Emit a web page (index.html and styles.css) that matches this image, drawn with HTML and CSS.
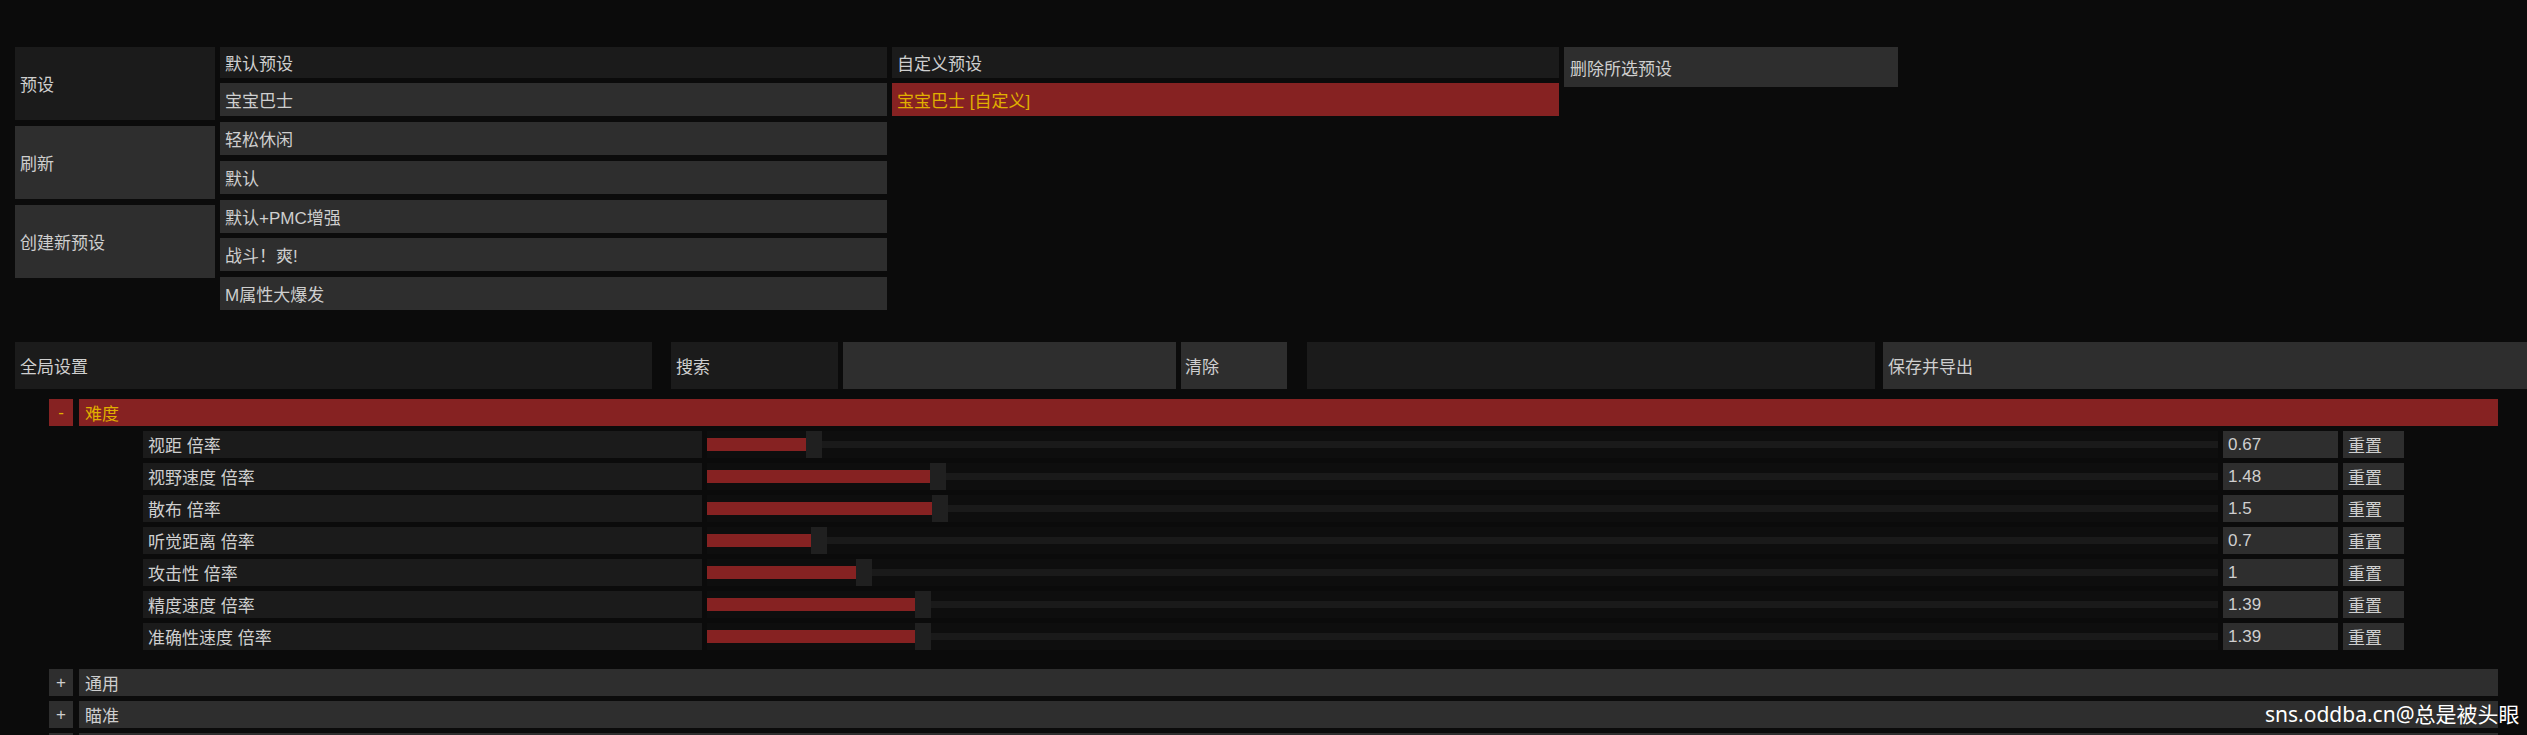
FILE: index.html
```html
<!DOCTYPE html>
<html lang="zh">
<head>
<meta charset="utf-8">
<title>SAIN</title>
<link rel="stylesheet" href="styles.css">
</head>
<body>
<div class="page">
  <div class="presets">
    <div class="col col-actions">
      <div class="btn btn-dark tall">预设</div>
      <div class="btn tall">刷新</div>
      <div class="btn tall">创建新预设</div>
    </div>
    <div class="col col-list">
      <div class="btn btn-dark head">默认预设</div>
      <div class="btn item">宝宝巴士</div>
      <div class="btn item">轻松休闲</div>
      <div class="btn item">默认</div>
      <div class="btn item">默认+PMC增强</div>
      <div class="btn item">战斗！爽!</div>
      <div class="btn item">M属性大爆发</div>
    </div>
    <div class="col col-list">
      <div class="btn btn-dark head">自定义预设</div>
      <div class="btn item selected">宝宝巴士 [自定义]</div>
    </div>
    <div class="col col-delete">
      <div class="btn del">删除所选预设</div>
    </div>
  </div>

  <div class="toolbar">
    <div class="btn btn-dark tb-global">全局设置</div>
    <div class="btn btn-dark tb-search">搜索</div>
    <div class="btn tb-input"></div>
    <div class="btn tb-clear">清除</div>
    <div class="btn btn-dark tb-blank"></div>
    <div class="btn tb-save">保存并导出</div>
  </div>

  <div class="section open">
    <div class="sec-head">
      <div class="toggle">-</div>
      <div class="sec-title">难度</div>
    </div>
    <div class="rows">
      <div class="row">
        <div class="label">视距 倍率</div>
        <div class="slider"><div class="track"></div><div class="fill" style="width:99px"></div><div class="thumb" style="left:99px"></div></div>
        <div class="value">0.67</div>
        <div class="reset">重置</div>
      </div>
      <div class="row">
        <div class="label">视野速度 倍率</div>
        <div class="slider"><div class="track"></div><div class="fill" style="width:223px"></div><div class="thumb" style="left:223px"></div></div>
        <div class="value">1.48</div>
        <div class="reset">重置</div>
      </div>
      <div class="row">
        <div class="label">散布 倍率</div>
        <div class="slider"><div class="track"></div><div class="fill" style="width:225px"></div><div class="thumb" style="left:225px"></div></div>
        <div class="value">1.5</div>
        <div class="reset">重置</div>
      </div>
      <div class="row">
        <div class="label">听觉距离 倍率</div>
        <div class="slider"><div class="track"></div><div class="fill" style="width:104px"></div><div class="thumb" style="left:104px"></div></div>
        <div class="value">0.7</div>
        <div class="reset">重置</div>
      </div>
      <div class="row">
        <div class="label">攻击性 倍率</div>
        <div class="slider"><div class="track"></div><div class="fill" style="width:149px"></div><div class="thumb" style="left:149px"></div></div>
        <div class="value">1</div>
        <div class="reset">重置</div>
      </div>
      <div class="row">
        <div class="label">精度速度 倍率</div>
        <div class="slider"><div class="track"></div><div class="fill" style="width:208px"></div><div class="thumb" style="left:208px"></div></div>
        <div class="value">1.39</div>
        <div class="reset">重置</div>
      </div>
      <div class="row">
        <div class="label">准确性速度 倍率</div>
        <div class="slider"><div class="track"></div><div class="fill" style="width:208px"></div><div class="thumb" style="left:208px"></div></div>
        <div class="value">1.39</div>
        <div class="reset">重置</div>
      </div>
    </div>
  </div>

  <div class="collapsed">
    <div class="sec-head">
      <div class="toggle">+</div>
      <div class="sec-title">通用</div>
    </div>
    <div class="sec-head">
      <div class="toggle">+</div>
      <div class="sec-title">瞄准</div>
    </div>
    <div class="sec-head">
      <div class="toggle"></div>
      <div class="sec-title"></div>
    </div>
  </div>

  <div class="watermark">sns.oddba.cn@总是被头眼</div>
</div>
</body>
</html>
```

FILE: styles.css
```css
html, body {
  margin: 0;
  padding: 0;
  background: #0b0b0b;
}

.page {
  position: relative;
  width: 2527px;
  height: 735px;
  overflow: hidden;
  font-family: "Liberation Sans", "Noto Sans CJK SC", sans-serif;
  font-size: 17px;
  color: #cfcfcf;
}

.btn {
  background: #2e2e2e;
  display: flex;
  align-items: center;
  padding-left: 5px;
  box-sizing: border-box;
  white-space: nowrap;
}

.btn-dark {
  background: #1b1b1b;
}

/* presets area */
.presets {
  display: flex;
  gap: 5px;
  padding: 47px 0 0 15px;
  align-items: flex-start;
}

.col {
  display: flex;
  flex-direction: column;
}

.col-actions {
  width: 200px;
  gap: 6px;
}

.tall {
  height: 73px;
}

.col-list {
  width: 667px;
  gap: 5.8px;
}

.head {
  height: 30.5px;
}

.item {
  height: 33px;
}

.selected {
  background: #862222;
  color: #e0b000;
}

.col-delete {
  width: 334px;
}

.del {
  height: 40px;
  padding-left: 6px;
}

/* toolbar */
.toolbar {
  display: flex;
  height: 47px;
  margin-top: 32px;
  padding-left: 15px;
}

.toolbar .btn {
  height: 47px;
  flex: none;
}

.tb-global { width: 637px; }
.tb-search { width: 167px; margin-left: 19px; }
.tb-input  { width: 333px; margin-left: 5px; }
.tb-clear  { width: 106px; margin-left: 5px; padding-left: 4px; }
.tb-blank  { width: 568px; margin-left: 20px; }
.tb-save   { width: 700px; margin-left: 8px; }

/* sections */
.section {
  margin-top: 10px;
}

.sec-head {
  display: flex;
  gap: 6px;
  height: 27px;
  margin-left: 49px;
  width: 2449px;
}

.toggle {
  width: 24px;
  background: #2e2e2e;
  display: flex;
  align-items: center;
  justify-content: center;
  flex: none;
}

.sec-title {
  flex: 1;
  background: #2e2e2e;
  display: flex;
  align-items: center;
  padding-left: 6px;
}

.open .toggle,
.open .sec-title {
  background: #862222;
  color: #e0b000;
}

.rows {
  display: flex;
  flex-direction: column;
  gap: 5px;
  margin-top: 5px;
  padding-left: 143px;
}

.row {
  display: flex;
  height: 27px;
  gap: 5px;
}

.label {
  width: 559px;
  background: #1b1b1b;
  display: flex;
  align-items: center;
  padding-left: 5px;
  box-sizing: border-box;
  flex: none;
}

.slider {
  position: relative;
  width: 1511px;
  background: #0e0e0e;
  flex: none;
}

.track {
  position: absolute;
  left: 0;
  right: 0;
  top: 10px;
  height: 7px;
  background: #1a1a1a;
}

.fill {
  position: absolute;
  left: 0;
  top: 7px;
  height: 13px;
  background: #862222;
}

.thumb {
  position: absolute;
  top: 0;
  width: 16px;
  height: 27px;
  background: #202020;
}

.value {
  width: 115px;
  background: #2e2e2e;
  display: flex;
  align-items: center;
  padding-left: 5px;
  box-sizing: border-box;
  flex: none;
}

.reset {
  width: 61px;
  background: #2e2e2e;
  display: flex;
  align-items: center;
  padding-left: 5px;
  box-sizing: border-box;
  flex: none;
}

.collapsed {
  display: flex;
  flex-direction: column;
  gap: 5px;
  margin-top: 19px;
}

.watermark {
  position: absolute;
  left: 2265px;
  top: 700px;
  font-family: "Noto Sans", "Noto Sans CJK SC", sans-serif;
  font-size: 21px;
  line-height: 28px;
  color: #ffffff;
  white-space: nowrap;
}
```
